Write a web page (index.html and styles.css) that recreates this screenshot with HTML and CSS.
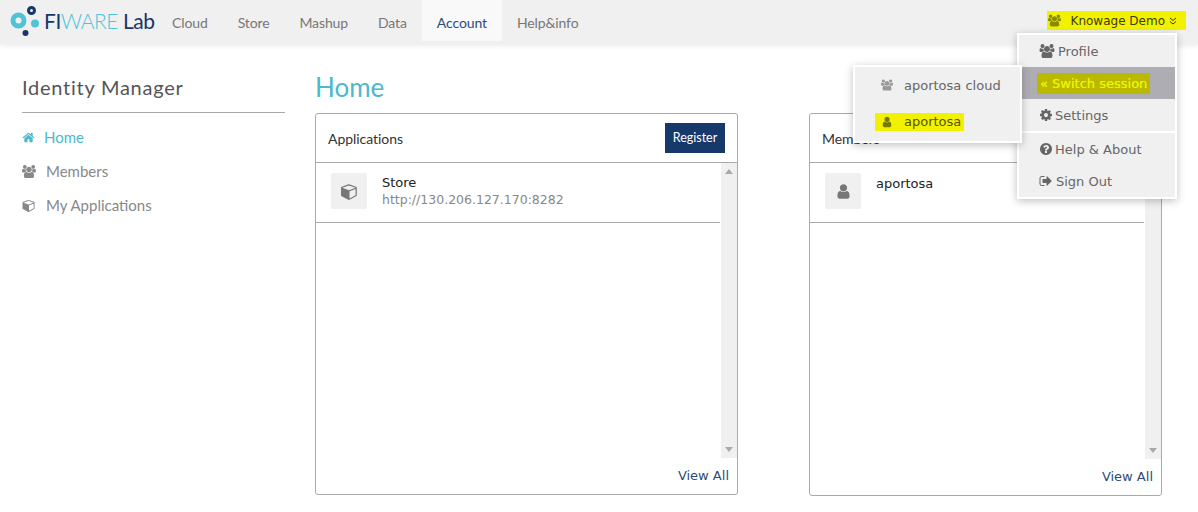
FILE: index.html
```html
<!DOCTYPE html>
<html lang="en">
<head>
    <meta charset="UTF-8">
    <meta name="viewport" content="width=device-width, initial-scale=1.0">
    <title>FIWARE Lab - Identity Manager</title>
    <link rel="stylesheet" href="styles.css">
</head>
<body>
    <svg class="defs" xmlns="http://www.w3.org/2000/svg">
        <symbol id="i-user" viewBox="0 0 1792 1792"><path d="M1536 1399q0 109-62.5 187t-150.5 78h-854q-88 0-150.5-78t-62.5-187q0-85 8.5-160.5t31.5-152 58.500-131 94-89 134.500-34.500q131 128 313 128t313-128q76 0 134.500 34.500t94 89 58.500 131 31.500 152 8.500 160.500zm-256-887q0 159-112.500 271.500t-271.500 112.500-271.500-112.500-112.500-271.500 112.500-271.500 271.500-112.500 271.500 112.500 112.500 271.500z"/></symbol>
        <symbol id="i-users" viewBox="0 0 1920 1792"><path d="M593 896q-162 5-265 128h-134q-82 0-138-40.500t-56-118.500q0-353 124-353 6 0 43.500 21t97.500 42.500 119 21.500q67 0 133-23-5 37-5 66 0 139 81 256zm1071 637q0 120-73 189.500t-194 69.500h-874q-121 0-194-69.500t-73-189.500q0-53 3.500-103.500t14-109 26.500-108.500 43-97.500 62-81 85.500-53.500 111.500-20q10 0 43 21.500t73 48 107 48 135 21.500 135-21.500 107-48 73-48 43-21.500q61 0 111.500 20t85.500 53.500 62 81 43 97.500 26.500 108.500 14 109 3.500 103.500zm-1024-1277q0 106-75 181t-181 75-181-75-75-181 75-181 181-75 181 75 75 181zm704 384q0 159-112.500 271.500t-271.500 112.500-271.500-112.500-112.500-271.500 112.500-271.500 271.500-112.500 271.500 112.500 112.500 271.500zm576 225q0 78-56 118.500t-138 40.500h-134q-103-123-265-128 81-117 81-256 0-29-5-66 66 23 133 23 59 0 119-21.500t97.500-42.500 43.500-21q124 0 124 353zm-128-609q0 106-75 181t-181 75-181-75-75-181 75-181 181-75 181 75 75 181z"/></symbol>
        <symbol id="i-home" viewBox="0 0 1792 1792"><path d="M1472 992v480q0 26-19 45t-45 19h-384v-384h-256v384h-384q-26 0-45-19t-19-45v-480q0-1 .5-3t.5-3l575-474 575 474q1 2 1 6zm223-69l-62 74q-8 9-21 11h-3q-13 0-21-7l-692-577-692 577q-12 8-24 7-13-2-21-11l-62-74q-8-10-7-23.500t11-21.500l719-599q32-26 76-26t76 26l244 204v-195q0-14 9-23t23-9h192q14 0 23 9t9 23v408l219 182q10 8 11 21.500t-7 23.500z"/></symbol>
        <symbol id="i-cube" viewBox="0 0 1792 1792"><path d="M896 1629l640-349v-636l-640 233v752zm-64-865l698-254-698-254-698 254zm832-252v768q0 35-18 65t-49 47l-704 384q-28 16-61 16t-61-16l-704-384q-31-17-49-47t-18-65v-768q0-40 23-73t61-47l704-256q22-8 44-8t44 8l704 256q38 14 61 47t23 73z"/></symbol>
        <symbol id="i-cog" viewBox="0 0 1792 1792"><path d="M1152 896q0-106-75-181t-181-75-181 75-75 181 75 181 181 75 181-75 75-181zm512-109v222q0 12-8 23t-20 13l-185 28q-19 54-39 91 35 50 107 138 10 12 10 25t-9 23q-27 37-99 108t-94 71q-12 0-26-9l-138-108q-44 23-91 38-16 136-29 186-7 28-36 28h-222q-14 0-24.500-8.500t-11.500-21.500l-28-184q-49-16-90-37l-141 107q-10 9-25 9-14 0-25-11-126-114-165-168-7-10-7-23 0-12 8-23 15-21 51-66.500t54-70.500q-27-50-41-99l-183-27q-13-2-21-12.500t-8-23.500v-222q0-12 8-23t19-13l186-28q14-46 39-92-40-57-107-138-10-12-10-24 0-10 9-23 26-36 98.500-107.500t94.500-71.500q13 0 26 10l138 107q44-23 91-38 16-136 29-186 7-28 36-28h222q14 0 24.500 8.500t11.500 21.500l28 184q49 16 90 37l142-107q9-9 24-9 13 0 25 10 129 119 165 170 7 8 7 22 0 12-8 23-15 21-51 66.500t-54 70.500q26 50 41 98l183 28q13 2 21 12.500t8 23.500z"/></symbol>
        <symbol id="i-help" viewBox="0 0 1792 1792"><path d="M1024 1376v-192q0-14-9-23t-23-9h-192q-14 0-23 9t-9 23v192q0 14 9 23t23 9h192q14 0 23-9t9-23zm256-672q0-88-55.500-163t-138.500-116-170-41q-243 0-371 213-15 24 8 42l132 100q7 6 19 6 16 0 25-12 53-68 86-92 34-24 86-24 48 0 85.500 26t37.500 59q0 38-20 61t-68 45q-63 28-115.500 86.500t-52.500 125.500v36q0 14 9 23t23 9h192q14 0 23-9t9-23q0-19 21.500-49.500t54.500-49.500q32-18 49-28.500t46-35 44.500-48 28-60.500 12.500-81zm384 192q0 209-103 385.500t-279.500 279.500-385.500 103-385.500-103-279.500-279.500-103-385.500 103-385.500 279.500-279.500 385.500-103 385.500 103 279.500 279.500 103 385.500z"/></symbol>
        <symbol id="i-signout" viewBox="0 0 1792 1792"><path d="M704 1440q0 4 1 20t.5 26.500-3 23.500-10 19.500-20.500 6.500h-320q-119 0-203.500-84.500t-84.500-203.500v-704q0-119 84.500-203.500t203.500-84.500h320q13 0 22.500 9.500t9.500 22.500q0 4 1 20t.5 26.500-3 23.500-10 19.500-20.500 6.500h-320q-66 0-113 47t-47 113v704q0 66 47 113t113 47h312l11.500 1 11.500 3 8 5.500 7 9 2 13.500zm928-544q0 26-19 45l-544 544q-19 19-45 19t-45-19-19-45v-288h-448q-26 0-45-19t-19-45v-384q0-26 19-45t45-19h448v-288q0-26 19-45t45-19 45 19l544 544q19 19 19 45z"/></symbol>
    </svg>

    <header class="topbar">
        <a class="brand">
            <svg class="brand-mark" viewBox="0 0 34 36" width="34" height="36">
                <circle cx="8.500" cy="16.500" r="5.500" fill="none" stroke="#4fc4d6" stroke-width="5"/>
                <circle cx="21.500" cy="6.500" r="3" fill="none" stroke="#17366b" stroke-width="3"/>
                <circle cx="25" cy="19.500" r="4" fill="#4fc4d6"/>
                <circle cx="15.500" cy="29" r="3" fill="#17366b"/>
            </svg>
            <span class="brand-text">FI<span class="brand-ware">WARE</span> Lab</span>
        </a>
        <nav class="topnav">
            <a>Cloud</a>
            <a>Store</a>
            <a>Mashup</a>
            <a>Data</a>
            <a class="active">Account</a>
            <a>Help&amp;info</a>
        </nav>
        <div class="user-toggle">
            <svg class="icon"><use href="#i-users"/></svg>
            <span>Knowage Demo</span>
            <svg class="chev" viewBox="0 0 8 8" width="8" height="8"><path d="M1 1l3 2.500L7 1M1 4.500L4 7l3-2.500" fill="none" stroke="currentColor" stroke-width="1"/></svg>
        </div>
    </header>

    <div class="page">
        <aside class="sidebar">
            <h3>Identity Manager</h3>
            <ul class="sidenav">
                <li class="active"><svg class="icon"><use href="#i-home"/></svg>Home</li>
                <li><svg class="icon wide"><use href="#i-users"/></svg>Members</li>
                <li><svg class="icon wide"><use href="#i-cube"/></svg>My Applications</li>
            </ul>
        </aside>

        <main class="content">
            <h1>Home</h1>
            <div class="panels">
                <section class="panel apps">
                    <div class="panel-head">
                        <span>Applications</span>
                        <button class="btn">Register</button>
                    </div>
                    <div class="panel-body">
                        <ul class="rows">
                            <li>
                                <span class="thumb"><svg><use href="#i-cube"/></svg></span>
                                <div>
                                    <div class="row-name">Store</div>
                                    <div class="row-url">http://130.206.127.170:8282</div>
                                </div>
                            </li>
                        </ul>
                        <div class="scrollbar"><i class="up"></i><i class="down"></i></div>
                    </div>
                    <div class="panel-foot"><a>View All</a></div>
                </section>

                <section class="panel members">
                    <div class="panel-head">
                        <span>Members</span>
                    </div>
                    <div class="panel-body">
                        <ul class="rows">
                            <li>
                                <span class="thumb"><svg><use href="#i-user"/></svg></span>
                                <div>
                                    <div class="row-name">aportosa</div>
                                </div>
                            </li>
                        </ul>
                        <div class="scrollbar"><i class="down"></i></div>
                    </div>
                    <div class="panel-foot"><a>View All</a></div>
                </section>
            </div>
        </main>
    </div>

    <div class="menu user-menu">
        <a><svg class="icon users"><use href="#i-users"/></svg>Profile</a>
        <a class="current"><span class="mark">« Switch session</span></a>
        <a><svg class="icon"><use href="#i-cog"/></svg>Settings</a>
        <div class="divider"></div>
        <a><svg class="icon"><use href="#i-help"/></svg>Help &amp; About</a>
        <a><svg class="icon signout"><use href="#i-signout"/></svg>Sign Out</a>
    </div>

    <div class="menu session-menu">
        <a><svg class="icon"><use href="#i-users"/></svg>aportosa cloud</a>
        <a><span class="mark"><svg class="icon"><use href="#i-user"/></svg>aportosa</span></a>
    </div>
</body>
</html>
```

FILE: styles.css
```css
* {
    box-sizing: border-box;
}

body {
    margin: 0;
    background-color: white;
    color: #333;
    font-family: "DejaVu Sans", sans-serif;
    font-size: 13px;
}

ul {
    list-style: none;
    margin: 0;
    padding: 0;
}

.defs {
    display: none;
}

.icon {
    width: 14px;
    height: 14px;
    fill: currentColor;
}

/* top bar */
.topbar {
    display: flex;
    align-items: flex-start;
    height: 44px;
    padding-left: 10px;
    background-color: #f0f0f0;
    box-shadow: 0 2px 5px rgba(0, 0, 0, 0.08);
}

.brand {
    display: flex;
    align-items: center;
    height: 41px;
    width: 147px;
}

.brand-mark {
    flex: none;
    margin-top: 2px;
}

.brand-text {
    font-family: Lato, sans-serif;
    font-size: 21px;
    letter-spacing: -0.5px;
    color: #17366b;
    white-space: nowrap;
}

.brand-ware {
    color: #4fc4d6;
    font-weight: 300;
}

.topnav {
    display: flex;
}

.topnav a {
    height: 41px;
    padding: 0 15px;
    line-height: 46px;
    font-family: Lato, sans-serif;
    font-size: 14px;
    letter-spacing: -0.12px;
    color: #777;
}

.topnav a.active {
    background-color: #f9f9f9;
    color: #2d4a78;
}

.user-toggle {
    display: flex;
    align-items: center;
    margin: 11px 12px 0 auto;
    height: 19px;
    padding: 0 9px 0 1px;
    background-color: #f2f200;
    color: #3c3c00;
    font-size: 12px;
}

.user-toggle .icon {
    width: 13px;
    height: 13px;
    color: #8a8a00;
    margin-right: 10px;
}

.user-toggle .chev {
    margin-left: 4px;
}

/* page */
.page {
    display: flex;
    padding-left: 22px;
}

.sidebar {
    width: 263px;
    margin-right: 30px;
    padding-top: 30px;
}

.sidebar h3 {
    margin: 0;
    height: 39px;
    padding-bottom: 12px;
    border-bottom: 1px solid #aaa;
    font-family: Lato, sans-serif;
    font-weight: 400;
    font-size: 20px;
    line-height: 26px;
    letter-spacing: 0.75px;
    color: #555;
}

.sidenav {
    padding-top: 7px;
}

.sidenav li {
    display: flex;
    align-items: center;
    height: 34px;
    font-family: Lato, sans-serif;
    font-size: 15px;
    color: #888;
}

.sidenav .icon {
    width: 13px;
    height: 13px;
    margin-right: 9px;
}

.sidenav .icon.wide {
    width: 14px;
    margin-right: 10px;
}

.sidenav li.active {
    color: #4cb9cc;
}

.content {
    width: 847px;
}

.content h1 {
    margin: 0;
    height: 69px;
    padding-top: 26px;
    font-family: Lato, sans-serif;
    font-weight: 400;
    font-size: 26px;
    line-height: 34px;
    color: #4cb9cc;
}

.panels {
    display: flex;
    justify-content: space-between;
    align-items: flex-start;
}

.panel {
    display: flex;
    flex-direction: column;
    border: 1px solid #aaa;
    border-radius: 3px;
}

.panel.apps {
    width: 423px;
    height: 382px;
}

.panel.members {
    width: 353px;
    height: 383px;
}

.panel-head {
    display: flex;
    align-items: center;
    justify-content: space-between;
    flex: none;
    height: 49px;
    padding: 0 12px;
    border-bottom: 1px solid #aaa;
    font-family: Lato, sans-serif;
    font-size: 14px;
    letter-spacing: -0.05px;
    color: #333;
}

.btn {
    width: 60px;
    height: 30px;
    padding: 0 0 2px;
    border: none;
    background-color: #17386a;
    color: white;
    font-family: Lato, sans-serif;
    font-size: 12.500px;
}

.panel-body {
    display: flex;
    flex: none;
    height: 295px;
}

.members .panel-body {
    height: 296px;
}

.rows {
    flex: 1;
}

.rows li {
    display: flex;
    height: 60px;
    padding: 10px 15px;
    border-bottom: 1px solid #aaa;
}

.thumb {
    display: flex;
    align-items: center;
    justify-content: center;
    flex: none;
    width: 36px;
    height: 36px;
    margin-right: 15px;
    background-color: #f0f0f0;
    border-radius: 2px;
    color: #777;
}

.thumb svg {
    width: 17px;
    height: 17px;
    fill: currentColor;
}

.row-name {
    margin-top: 1px;
    color: #222;
    line-height: 18px;
}

.members .row-name {
    margin-top: 2px;
}

.row-url {
    color: #888;
    font-size: 12.500px;
    line-height: 16px;
}

.scrollbar {
    display: flex;
    flex-direction: column;
    flex: none;
    width: 16px;
    margin-left: 1px;
    padding: 6px 4px;
    background-color: #f0f0f0;
}

.scrollbar i {
    display: block;
    border-left: 4px solid transparent;
    border-right: 4px solid transparent;
}

.scrollbar .up {
    border-bottom: 5px solid #aaa;
}

.scrollbar .down {
    margin-top: auto;
    border-top: 5px solid #aaa;
}

.panel-foot {
    flex: 1;
    padding: 10px 8px 0;
    text-align: right;
    color: #2d4a78;
}

/* dropdowns */
.menu {
    position: absolute;
    background-color: #f0f0f0;
    border: 2px solid white;
    box-shadow: 0 2px 8px rgba(0, 0, 0, 0.25);
    color: #666;
}

.menu a {
    display: flex;
    align-items: center;
    height: 32px;
    padding-left: 20px;
}

.menu .icon {
    margin-right: 2px;
}

.user-menu {
    top: 33px;
    left: 1017px;
    width: 160px;
}

.user-menu .icon.users {
    width: 16px;
    margin-right: 3px;
}

.user-menu .icon.signout {
    margin-right: 3px;
}

.user-menu .current {
    padding-left: 18px;
    background-color: #adadb3;
}

.user-menu .current .mark {
    padding: 3px;
    background-color: #b9b900;
    color: #f2f200;
    line-height: 15px;
    text-shadow: 0 0 0.6px #f2f200;
}

.divider {
    height: 2px;
    background-color: white;
}

.session-menu {
    top: 65px;
    left: 853px;
    width: 169px;
    height: 78px;
}

.session-menu a {
    height: 37px;
    padding-left: 26px;
}

.session-menu a:first-child {
    height: 36px;
}

.session-menu .icon {
    width: 12px;
    height: 12px;
    margin-right: 11px;
    color: #999;
}

.session-menu .mark {
    display: flex;
    align-items: center;
    height: 18px;
    margin-left: -6px;
    padding: 0 3px 0 6px;
    background-color: #f2f200;
    color: #555500;
}

.session-menu .mark .icon {
    color: #777700;
}
```
